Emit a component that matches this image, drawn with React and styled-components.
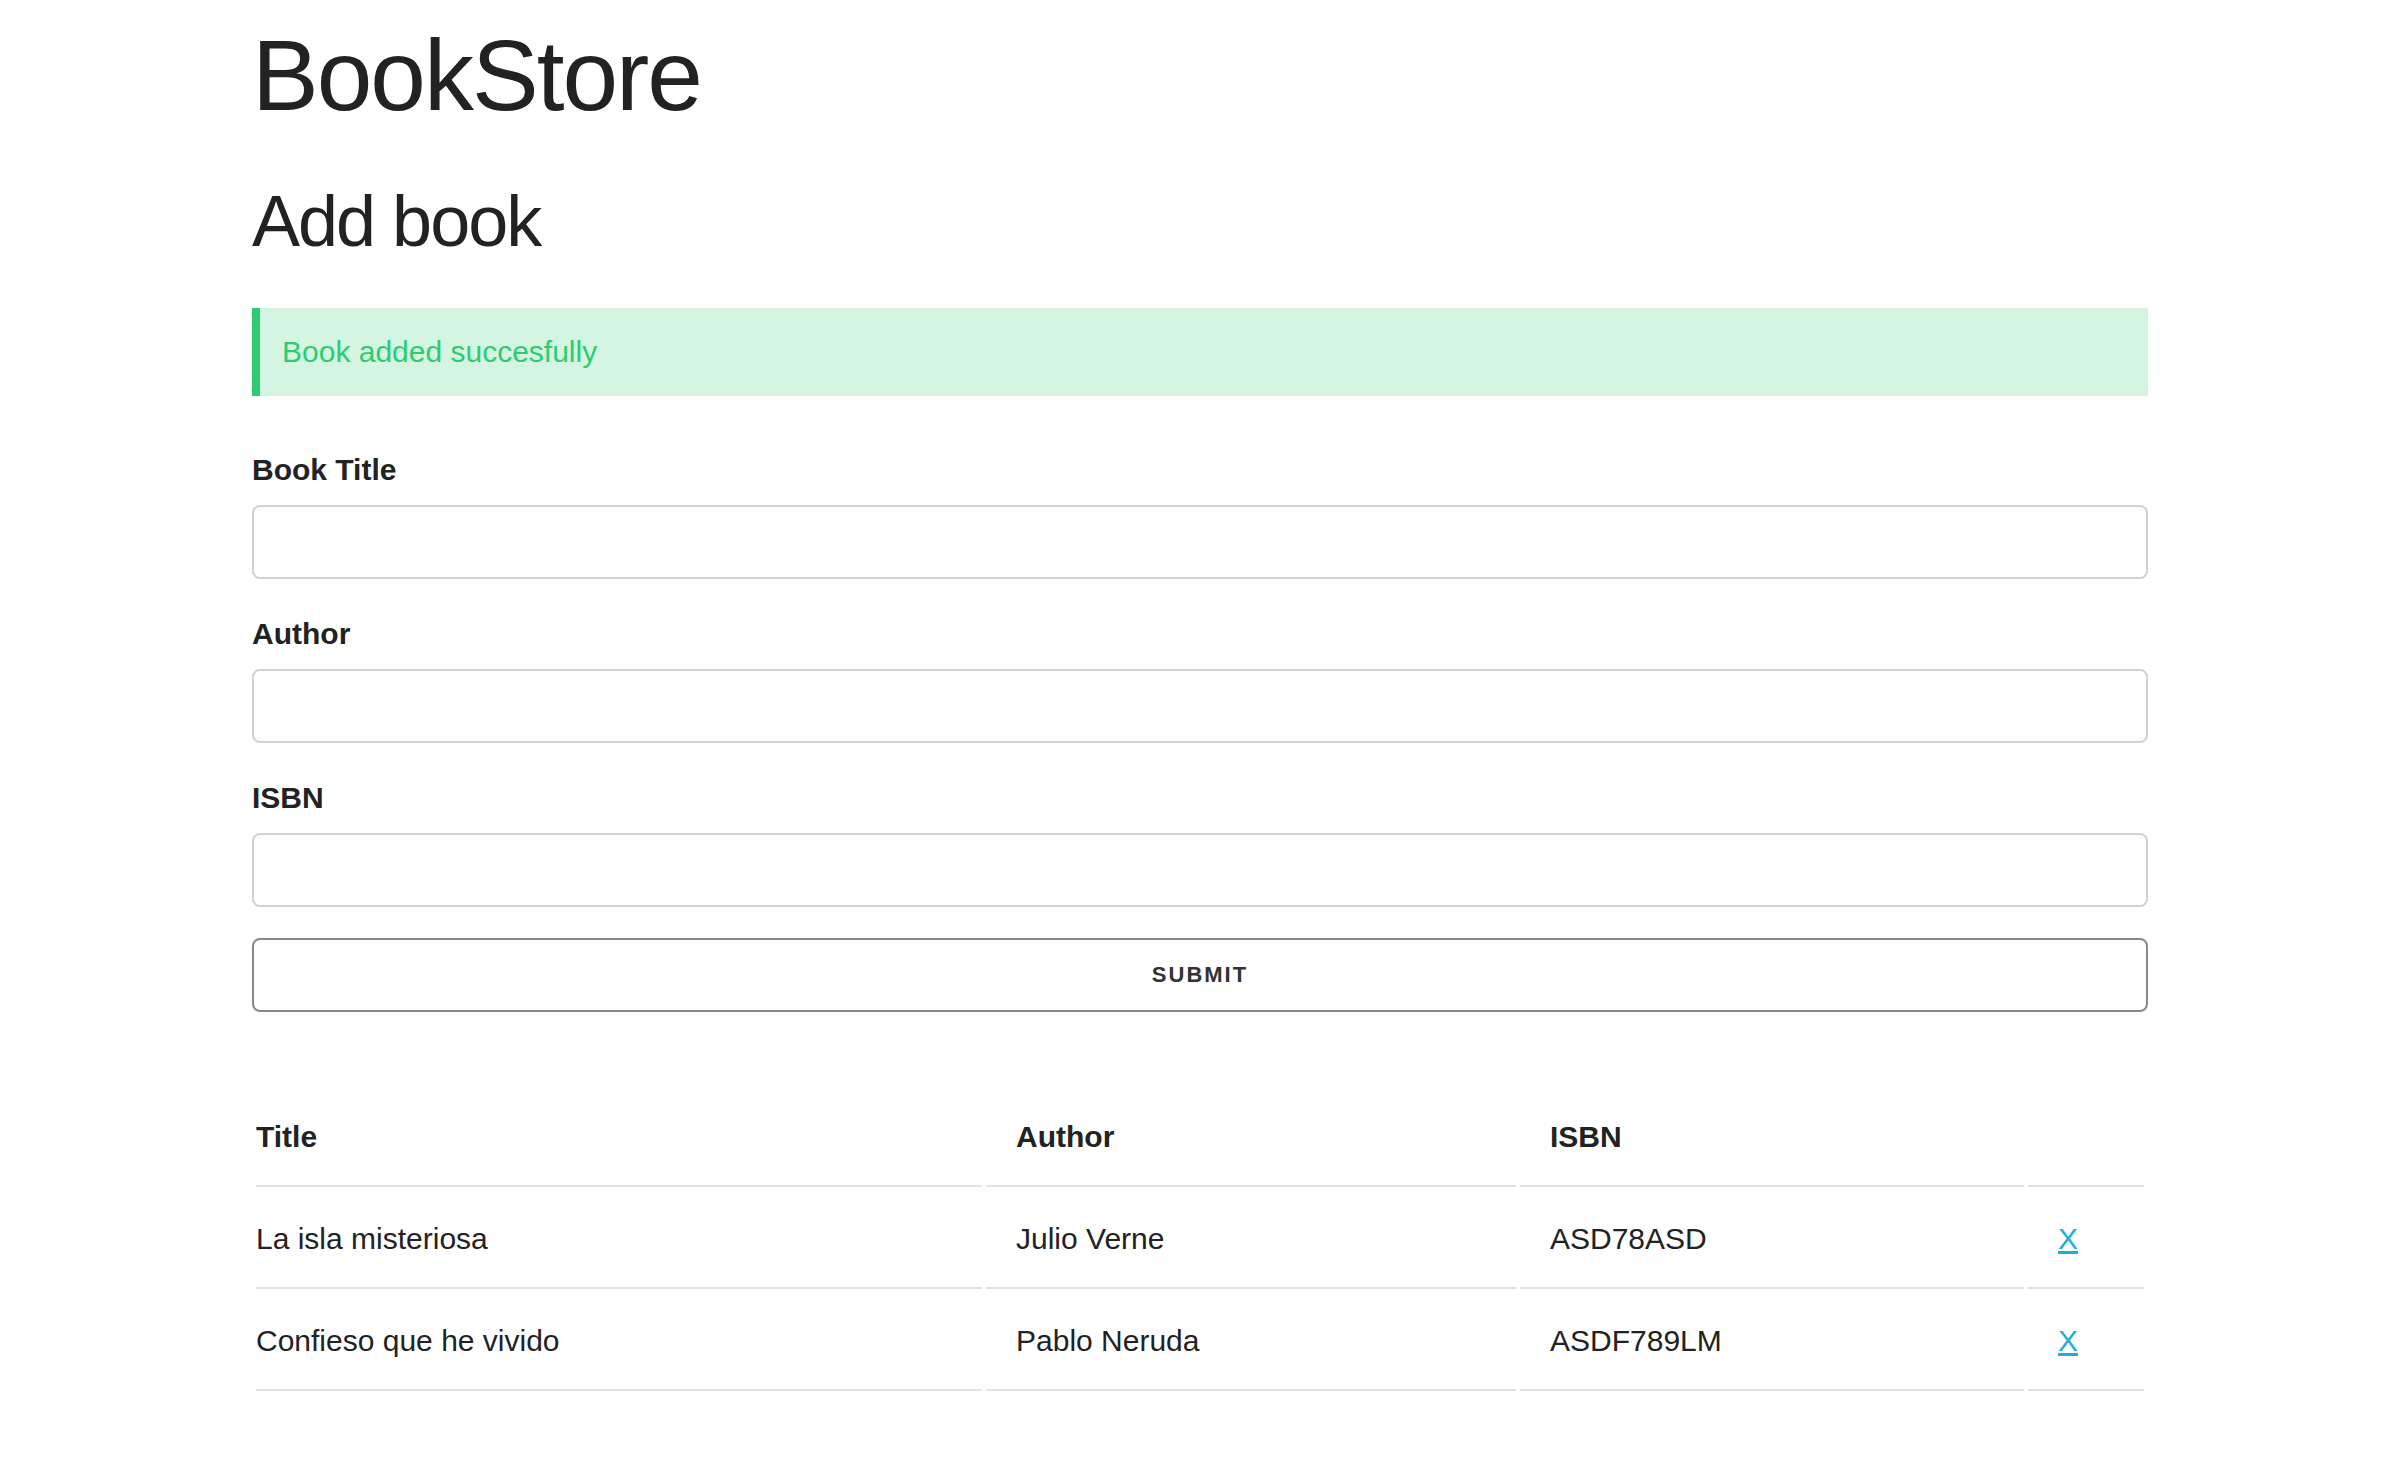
import React, { useState } from "react";
import styled, { createGlobalStyle } from "styled-components";

const GlobalStyle = createGlobalStyle`
  *, *::before, *::after {
    box-sizing: border-box;
  }
  body {
    margin: 0;
    background: #fff;
    color: #222;
    font-family: "Liberation Sans", Arial, Helvetica, sans-serif;
    font-size: 30px;
    line-height: 1.6;
  }
`;

const initialBooks = [
  { title: "La isla misteriosa", author: "Julio Verne", isbn: "ASD78ASD" },
  { title: "Confieso que he vivido", author: "Pablo Neruda", isbn: "ASDF789LM" },
];

function App() {
  const [books, setBooks] = useState(initialBooks);
  const [formdata, setFormData] = useState({ title: "", author: "", isbn: "" });

  const handleChange = (e) => {
    setFormData({ ...formdata, [e.target.name]: e.target.value });
  };

  const handleSubmit = (e) => {
    e.preventDefault();
    if (!formdata.title) return;
    setBooks([...books, formdata]);
    setFormData({ title: "", author: "", isbn: "" });
  };

  const removeBook = (isbn) => (e) => {
    e.preventDefault();
    setBooks(books.filter((b) => b.isbn !== isbn));
  };

  return (
    <Container>
      <GlobalStyle />
      <Heading>BookStore</Heading>
      <SubHeading>Add book</SubHeading>

      <Alert>Book added succesfully</Alert>

      <form onSubmit={handleSubmit}>
        <Label htmlFor="title">Book Title</Label>
        <Input id="title" name="title" value={formdata.title} onChange={handleChange} />
        <Label htmlFor="author">Author</Label>
        <Input id="author" name="author" value={formdata.author} onChange={handleChange} />
        <Label htmlFor="isbn">ISBN</Label>
        <Input id="isbn" name="isbn" value={formdata.isbn} onChange={handleChange} />
        <SubmitButton type="submit">Submit</SubmitButton>
      </form>

      <BookTable>
        <thead>
          <tr>
            <Th $width={726}>Title</Th>
            <Th $width={530}>Author</Th>
            <Th $width={504}>ISBN</Th>
            <Th />
          </tr>
        </thead>
        <tbody>
          {books.map((book) => (
            <tr key={book.isbn}>
              <Td>{book.title}</Td>
              <Td>{book.author}</Td>
              <Td>{book.isbn}</Td>
              <Td>
                <RemoveLink href="#" onClick={removeBook(book.isbn)}>
                  X
                </RemoveLink>
              </Td>
            </tr>
          ))}
        </tbody>
      </BookTable>
    </Container>
  );
}

const Container = styled.div`
  width: 1896px;
  margin: 0 auto;
  padding-top: 15px;
`;

const Heading = styled.h1`
  margin: 0 0 40px;
  font-size: 100px;
  font-weight: 400;
  line-height: 1.2;
  letter-spacing: -2px;
  color: #222;
`;

const SubHeading = styled.h2`
  margin: 0 0 39px;
  font-size: 72px;
  font-weight: 400;
  line-height: 1.3;
  letter-spacing: -2px;
  color: #222;
`;

const Alert = styled.div`
  background: #d5f5e3;
  border-left: 8px solid #2ecc71;
  color: #2ecc71;
  padding: 20px 22px;
  margin-bottom: 50px;
`;

const Label = styled.label`
  display: block;
  margin-bottom: 11px;
  font-weight: 700;
`;

const Input = styled.input`
  display: block;
  width: 100%;
  height: 74px;
  margin: 0 0 31px;
  padding: 12px 20px;
  border: 2px solid #d1d1d1;
  border-radius: 8px;
  background: #fff;
  font: inherit;
  color: #222;
  outline: none;

  &:focus {
    border-color: #33c3f0;
  }
`;

const SubmitButton = styled.button`
  display: block;
  width: 100%;
  height: 74px;
  padding: 0 60px;
  border: 2px solid #888;
  border-radius: 8px;
  background: transparent;
  color: #333;
  font-family: inherit;
  font-size: 22px;
  font-weight: 700;
  letter-spacing: 2px;
  text-transform: uppercase;
  cursor: pointer;
`;

const BookTable = styled.table`
  width: 100%;
  margin-top: 73px;
  border-collapse: separate;
  border-spacing: 4px;
  table-layout: fixed;
`;

const Th = styled.th`
  width: ${(p) => (p.$width ? `${p.$width}px` : "auto")};
  padding: 24px 30px;
  border-bottom: 2px solid #e1e1e1;
  text-align: left;
  font-weight: 700;
  line-height: 48px;

  &:first-child {
    padding-left: 0;
  }
  &:last-child {
    padding-right: 0;
  }
`;

const Td = styled.td`
  padding: 24px 30px;
  border-bottom: 2px solid #e1e1e1;
  text-align: left;
  line-height: 48px;

  &:first-child {
    padding-left: 0;
  }
  &:last-child {
    padding-right: 0;
  }
`;

const RemoveLink = styled.a`
  color: #1eaedb;
  text-decoration: underline;
`;

export default App;
